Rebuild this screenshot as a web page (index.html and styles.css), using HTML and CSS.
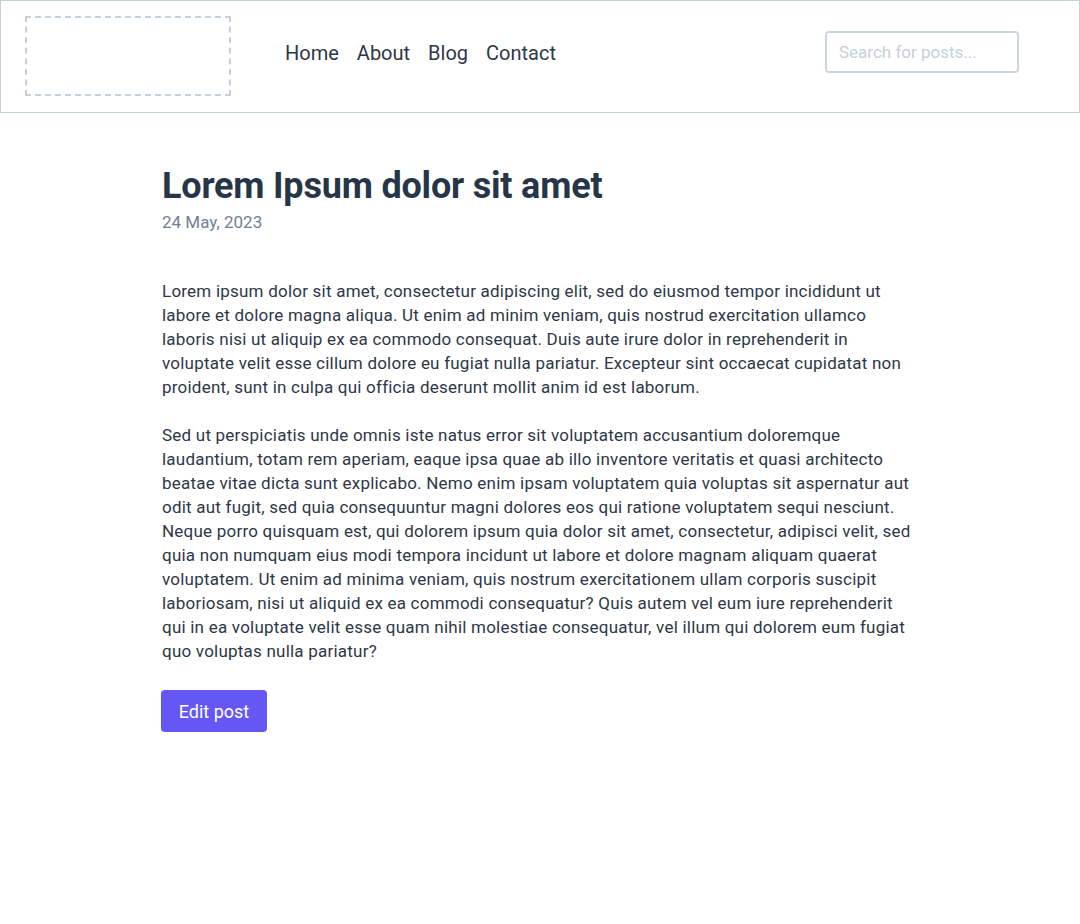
FILE: index.html
```html
<!DOCTYPE html>
<html lang="en">
<head>
<meta charset="utf-8">
<title>Lorem Ipsum dolor sit amet</title>
<link rel="stylesheet" href="styles.css">
</head>
<body>
<header class="site-header">
  <div class="logo-placeholder"></div>
  <nav class="main-nav">
    <a href="#" class="nav-link">Home</a>
    <a href="#" class="nav-link">About</a>
    <a href="#" class="nav-link">Blog</a>
    <a href="#" class="nav-link">Contact</a>
  </nav>
  <input class="search-input" type="text" placeholder="Search for posts...">
</header>
<main class="post">
  <h1 class="post-title">Lorem Ipsum dolor sit amet</h1>
  <p class="post-date">24 May, 2023</p>
  <div class="post-body">
    <p>Lorem ipsum dolor sit amet, consectetur adipiscing elit, sed do eiusmod tempor incididunt ut labore et dolore magna aliqua. Ut enim ad minim veniam, quis nostrud exercitation ullamco laboris nisi ut aliquip ex ea commodo consequat. Duis aute irure dolor in reprehenderit in voluptate velit esse cillum dolore eu fugiat nulla pariatur. Excepteur sint occaecat cupidatat non proident, sunt in culpa qui officia deserunt mollit anim id est laborum.</p>
    <p>Sed ut perspiciatis unde omnis iste natus error sit voluptatem accusantium doloremque laudantium, totam rem aperiam, eaque ipsa quae ab illo inventore veritatis et quasi architecto beatae vitae dicta sunt explicabo. Nemo enim ipsam voluptatem quia voluptas sit aspernatur aut odit aut fugit, sed quia consequuntur magni dolores eos qui ratione voluptatem sequi nesciunt. Neque porro quisquam est, qui dolorem ipsum quia dolor sit amet, consectetur, adipisci velit, sed quia non numquam eius modi tempora incidunt ut labore et dolore magnam aliquam quaerat voluptatem. Ut enim ad minima veniam, quis nostrum exercitationem ullam corporis suscipit laboriosam, nisi ut aliquid ex ea commodi consequatur? Quis autem vel eum iure reprehenderit qui in ea voluptate velit esse quam nihil molestiae consequatur, vel illum qui dolorem eum fugiat quo voluptas nulla pariatur?</p>
  </div>
  <button class="edit-button" type="button">Edit post</button>
</main>
</body>
</html>
```
FILE: styles.css
```css
* { box-sizing: border-box; }
html, body { margin: 0; padding: 0; background: #fff; }
body {
  font-family: Roboto, "Liberation Sans", sans-serif;
  color: #2d3748;
}
.site-header {
  display: flex;
  align-items: center;
  height: 113px;
  padding: 0 60px 0 24px;
  border: 1px solid #c5d0dc;
}
.logo-placeholder {
  width: 206px;
  height: 80px;
  border: 2px dashed #c5d0dc;
  margin-top: -1px;
}
.main-nav {
  display: flex;
  gap: 18px;
  margin-left: 54px;
  margin-top: -8px;
}
.nav-link {
  font-size: 20px;
  color: #2d3748;
  text-decoration: none;
}
.search-input {
  margin-left: auto;
  width: 194px;
  height: 42px;
  border: 2px solid #cbd5e1;
  border-radius: 4px;
  padding: 0 12px;
  font-family: inherit;
  font-size: 17px;
  color: #2d3748;
  margin-top: -10px;
}
.search-input::placeholder { color: #c5d0dc; }
.post {
  width: 756px;
  margin: 0 auto;
  padding-top: 52px;
}
.post-title {
  margin: 0;
  font-size: 36px;
  line-height: 42px;
  font-weight: 700;
  letter-spacing: -0.2px;
  color: #263646;
}
.post-date {
  margin: 3px 0 0;
  font-size: 17px;
  line-height: 24px;
  color: #718096;
}
.post-body {
  margin-top: 45px;
  font-size: 17px;
  line-height: 24px;
  letter-spacing: 0.22px;
}
.post-body p { margin: 0 0 24px; }
.edit-button {
  display: inline-block;
  margin-left: -1px;
  margin-top: 3px;
  width: 106px;
  height: 42px;
  background: #6457f5;
  color: #fff;
  border: none;
  border-radius: 4px;
  font-family: inherit;
  font-size: 18px;
}
```
